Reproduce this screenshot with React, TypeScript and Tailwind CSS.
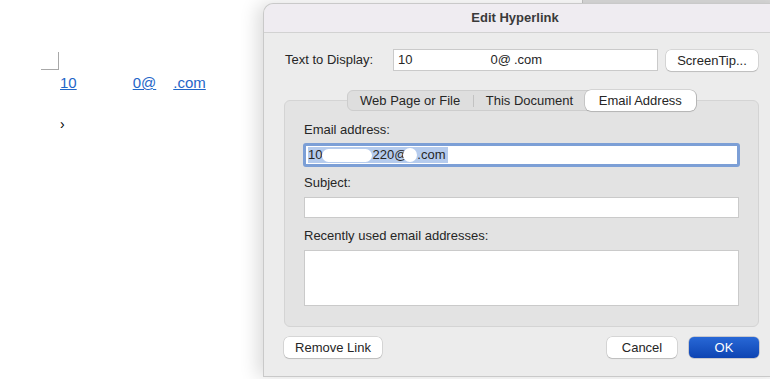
const Field = ({ className = "" }: { className?: string }) => (
  <div className={`h-[21px] bg-white border border-[#cacaca] ${className}`} />
)

const Btn = ({ label, className = "" }: { label: string; className?: string }) => (
  <button className={`h-[21px] rounded-[5px] bg-white shadow-[0_0_0_0.5px_rgba(0,0,0,0.18),0_1px_1px_rgba(0,0,0,0.12)] text-[13px] text-[#262626] leading-none ${className}`}>
    {label}
  </button>
)

export default function App() {
  return (
    <div className="relative w-[770px] h-[379px] overflow-hidden bg-white flex font-['Liberation_Sans',Arial,sans-serif] text-[13px] text-[#262626]">
      {/* page behind the sheet */}
      <div className="absolute left-[582px] top-0 w-[200px] h-[4px] bg-[#dcdcdc] border-l border-[#c4c4c4]" />

      <div className="w-[263px] shrink-0 pl-[41px] pt-[52px]">
        <div className="w-[18px] h-[18px] border-r border-b border-[#a8a8a8]" />
        <div className="pl-[19px] mt-[4px] flex items-baseline text-[15px] leading-[18px] text-[#1f66c8]">
          <span className="underline">10</span>
          <span className="w-[56px]" />
          <span className="underline">0@</span>
          <span className="w-[17px]" />
          <span className="underline">.com</span>
        </div>
        <div className="pl-[19px] mt-[25px] text-[14px] leading-none text-black">›</div>
      </div>

      <div className="relative mt-[3px] w-[520px] h-[374px] shrink-0 rounded-tl-[10px] bg-[#ececec] border-l border-t border-b border-[#c9c9c9] shadow-[-6px_0_18px_rgba(0,0,0,0.14)] flex flex-col">
        <div className="h-[29px] shrink-0 rounded-tl-[10px] bg-[#efecf1] border-b border-[#d2d2d2] flex items-center">
          <div className="w-[502px] text-center font-bold text-[13px] text-[#3a3a3a]">Edit Hyperlink</div>
        </div>

        <div className="ml-[20px] w-[475px] flex flex-col">
          <div className="mt-[16px] flex items-center h-[22px]">
            <span className="w-[109px] pl-[1px]">Text to Display:</span>
            <div className="w-[265px] h-[22px] bg-white border border-[#cacaca] flex items-center pl-[4px] text-[13px]">
              <span>10</span>
              <span className="w-[78px]" />
              <span>0@</span>
              <span className="w-[3px]" />
              <span>.com</span>
            </div>
            <Btn label="ScreenTip..." className="ml-[8px] w-[92px]" />
          </div>

          <div className="mt-[29px] h-[227px] rounded-[6px] bg-[#e3e3e3] border border-[#d4d4d4] flex flex-col">
            <div className="-mt-[11px] flex justify-center">
              <div className="h-[21px] w-[350px] rounded-[6px] bg-[#dedede] border border-[#cdcdcd] flex items-center text-[13px]">
                <div className="w-[126px] text-center">Web Page or File</div>
                <div className="w-px h-[12px] bg-[#c2c2c2]" />
                <div className="w-[112px] text-center">This Document</div>
                <div className="h-[21px] -my-px w-[111px] rounded-[6px] bg-white shadow-[0_0_0_0.5px_rgba(0,0,0,0.2),0_1px_1px_rgba(0,0,0,0.12)] flex items-center justify-center">
                  Email Address
                </div>
              </div>
            </div>

            <div className="px-[19px] flex flex-col">
              <div className="mt-[11px] leading-[15px]">Email address:</div>
              <div className="mt-[6px] -ml-px w-[437px] h-[24px] rounded-[3px] border-[3px] border-[#7c9fd6] bg-white flex items-center pl-[2px]">
                <div className="relative h-[16px] bg-[#b5cbed] flex items-center pr-[2px] text-[13px]">
                  <span>10</span>
                  <span className="w-[50px] h-[13px] rounded-full bg-white" />
                  <span>220@</span>
                  <span className="w-[14px] h-[14px] rounded-full bg-white -ml-[4px]" />
                  <span>.com</span>
                </div>
              </div>
              <div className="mt-[8px] leading-[15px]">Subject:</div>
              <Field className="mt-[7px] w-[435px]" />
              <div className="mt-[10px] leading-[15px]">Recently used email addresses:</div>
              <div className="mt-[7px] w-[435px] h-[56px] bg-white border border-[#cacaca]" />
            </div>
          </div>

          <div className="mt-[10px] flex items-center">
            <Btn label="Remove Link" className="w-[98px]" />
            <div className="flex-1" />
            <Btn label="Cancel" className="w-[70px]" />
            <button className="ml-[12px] w-[70px] h-[21px] rounded-[5px] bg-gradient-to-b from-[#2868d6] to-[#0e44b3] shadow-[0_0_0_0.5px_rgba(0,0,40,0.3)] text-white text-[13px] leading-none">
              OK
            </button>
          </div>
        </div>
      </div>
    </div>
  )
}
